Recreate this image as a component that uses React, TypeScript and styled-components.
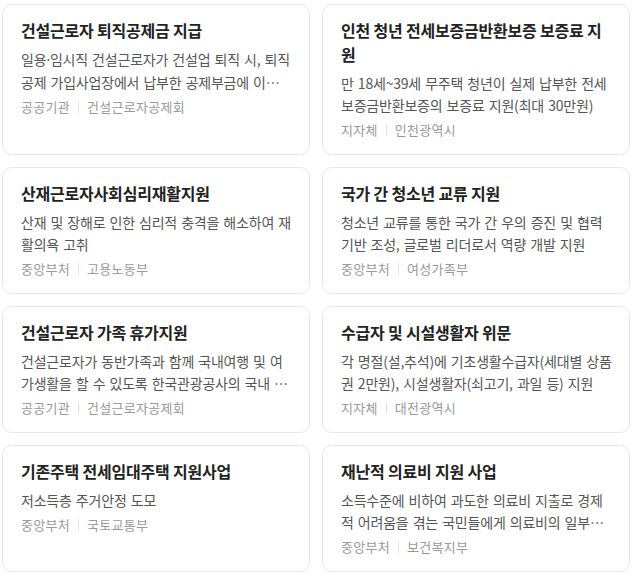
import React from "react";
import styled, { createGlobalStyle } from "styled-components";

const Global = createGlobalStyle`
  html, body { margin: 0; padding: 0; background: #ffffff; }
  body { font-family: "Noto Sans CJK KR", "Noto Sans", sans-serif; }
  * { box-sizing: border-box; }
`;

const Grid = styled.div`
  display: grid;
  grid-template-columns: 308px 308px;
  column-gap: 12px;
  row-gap: 12px;
  padding: 4px 3px 4px 2px;
`;

const Card = styled.article`
  border: 1px solid #e6e7ee;
  border-radius: 10px;
  background: #fff;
  padding: 13px 17px 14px 18px;
  display: flex;
  flex-direction: column;
`;

const Title = styled.h3`
  margin: 0 0 6px;
  font-size: 16px;
  line-height: 24px;
  font-weight: 700;
  color: #222;
  letter-spacing: -0.2px;
`;

const Desc = styled.p`
  margin: 0 0 4px;
  font-size: 14px;
  line-height: 22px;
  color: #555;
  display: -webkit-box;
  -webkit-line-clamp: 2;
  -webkit-box-orient: vertical;
  overflow: hidden;
  letter-spacing: -0.2px;
  word-spacing: 1.2px;
`;

const Dot = styled.span`
  font-family: "Noto Sans", sans-serif;
`;

const Meta = styled.div`
  display: flex;
  align-items: center;
  font-size: 13px;
  line-height: 20px;
  color: #999;
  letter-spacing: 0.3px;
`;

const Sep = styled.span`
  width: 1px;
  height: 12px;
  background: #e2e2e2;
  margin: 0 8px;
`;

type Item = { title: string; desc: React.ReactNode; type: string; org: string };

const items: Item[] = [
  {
    title: "건설근로자 퇴직공제금 지급",
    desc: (
      <>
        일용<Dot>·</Dot>임시직 건설근로자가 건설업 퇴직 시, 퇴직공제 가입사업장에서 납부한 공제부금에 이자를 더하여 지급
      </>
    ),
    type: "공공기관",
    org: "건설근로자공제회",
  },
  {
    title: "인천 청년 전세보증금반환보증 보증료 지원",
    desc: "만 18세~39세 무주택 청년이 실제 납부한 전세보증금반환보증의 보증료 지원(최대 30만원)",
    type: "지자체",
    org: "인천광역시",
  },
  {
    title: "산재근로자사회심리재활지원",
    desc: "산재 및 장해로 인한 심리적 충격을 해소하여 재활의욕 고취",
    type: "중앙부처",
    org: "고용노동부",
  },
  {
    title: "국가 간 청소년 교류 지원",
    desc: "청소년 교류를 통한 국가 간 우의 증진 및 협력기반 조성, 글로벌 리더로서 역량 개발 지원",
    type: "중앙부처",
    org: "여성가족부",
  },
  {
    title: "건설근로자 가족 휴가지원",
    desc: "건설근로자가 동반가족과 함께 국내여행 및 여가생활을 할 수 있도록 한국관광공사의 국내 여행상품 이용 비용을 지원",
    type: "공공기관",
    org: "건설근로자공제회",
  },
  {
    title: "수급자 및 시설생활자 위문",
    desc: "각 명절(설,추석)에 기초생활수급자(세대별 상품권 2만원), 시설생활자(쇠고기, 과일 등) 지원",
    type: "지자체",
    org: "대전광역시",
  },
  {
    title: "기존주택 전세임대주택 지원사업",
    desc: "저소득층 주거안정 도모",
    type: "중앙부처",
    org: "국토교통부",
  },
  {
    title: "재난적 의료비 지원 사업",
    desc: "소득수준에 비하여 과도한 의료비 지출로 경제적 어려움을 겪는 국민들에게 의료비의 일부를 지원",
    type: "중앙부처",
    org: "보건복지부",
  },
];

export default function App() {
  return (
    <>
      <Global />
      <Grid>
        {items.map((it) => (
          <Card key={it.title}>
            <Title>{it.title}</Title>
            <Desc>{it.desc}</Desc>
            <Meta>
              <span>{it.type}</span>
              <Sep />
              <span>{it.org}</span>
            </Meta>
          </Card>
        ))}
      </Grid>
    </>
  );
}
